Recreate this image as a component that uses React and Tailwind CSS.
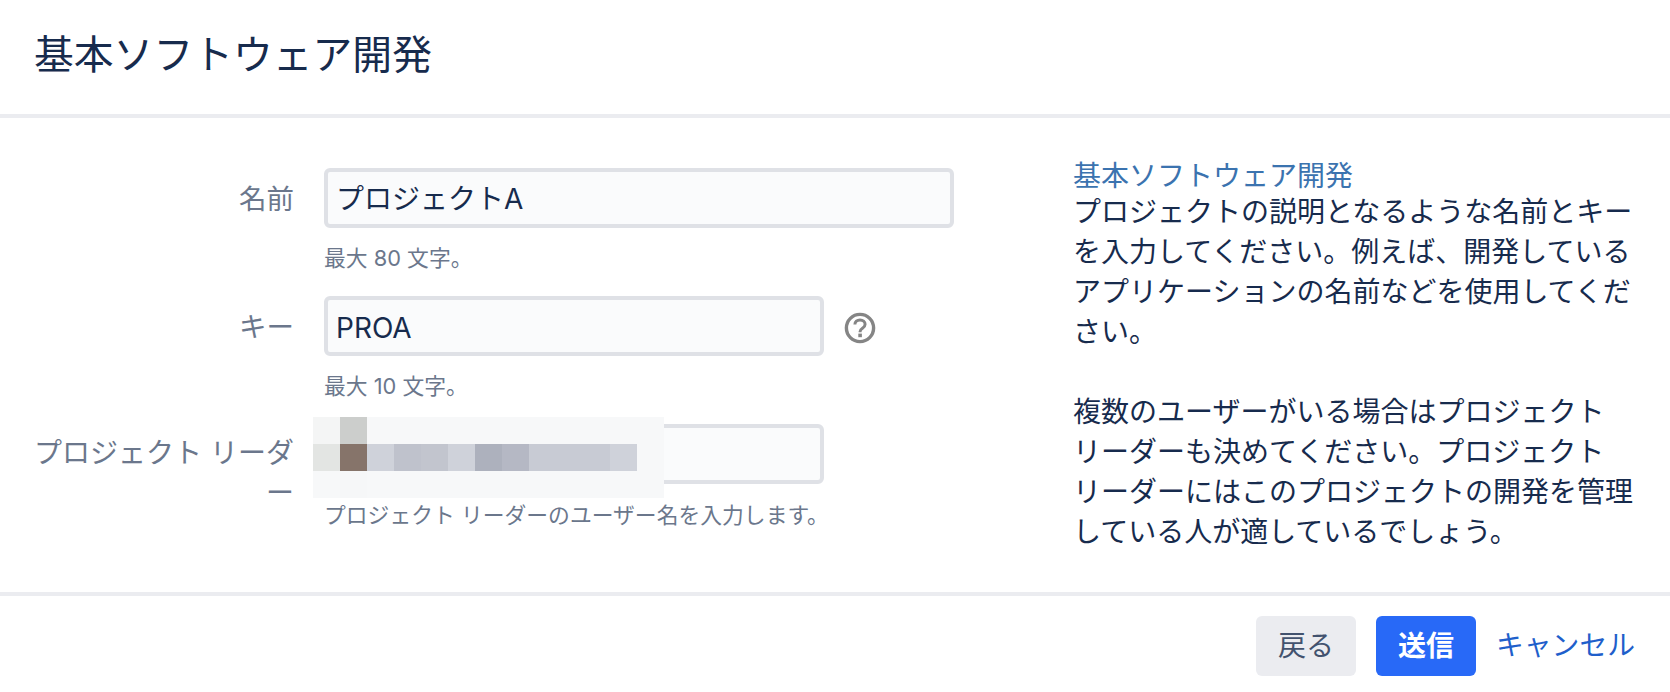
import React from "react";

const FONT = "font-['Inter','Noto_Sans_CJK_JP','Noto_Sans_JP',sans-serif]";

const C = "#f7f8f9";
const rows = [
  ["#f4f5f5", "#cccecc", C, C, C, C, C, C, C, C, C, C, C],
  ["#e3e5e3", "#86746a", "#cfd2da", "#bfc2cc", "#c2c5ce", "#cfd2da", "#adb1bd", "#b5b8c4", "#c8cbd4", "#c8cbd4", "#c8cbd4", "#cfd2da", C],
  [C, "#f6f7f8", C, C, C, C, C, C, C, C, C, C, C],
];

function Mosaic() {
  return (
    <div className="absolute left-[-11px] top-[-7px] grid grid-cols-[repeat(13,27px)] grid-rows-[repeat(3,27px)]">
      {rows.flat().map((c, i) => (
        <div key={i} style={{ backgroundColor: c }} />
      ))}
    </div>
  );
}

function HelpIcon() {
  return (
    <svg width="32" height="32" viewBox="0 0 32 32" fill="none" className="ml-5 mt-[16px] shrink-0">
      <circle cx="16" cy="16" r="13.6" stroke="#858585" strokeWidth="3.4" />
      <path
        d="M10.9 12.6c0-2.9 2.2-4.7 5.1-4.7s5.1 1.7 5.1 4.3c0 2-1.1 3-2.6 4-1.5 1-2.4 1.7-2.4 3.4v.6"
        stroke="#858585"
        strokeWidth="3"
      />
      <rect x="14.3" y="21.6" width="3.6" height="3.6" fill="#858585" />
    </svg>
  );
}

function Field({ label, value, hint, inputWidth, help, overlay, inputClass = "", labelClass = "pt-[11px] text-[27.5px]", hintMt = "mt-[14px]", mb = "mb-[22px]" }) {
  return (
    <div className={`flex items-start ${mb}`}>
      <label className={`ml-[23px] w-[271px] shrink-0 text-right leading-[40px] text-[#6b778c] ${labelClass}`}>
        {label}
      </label>
      <div className="ml-[30px]">
        <div className="flex items-start">
          <div className={`relative ${inputWidth}`}>
            <input
              readOnly
              value={value}
              className={`block h-[60px] w-full rounded-md border-4 border-[#dfe1e6] bg-[#fafbfc] px-[8px] text-[28px] text-[#172b4d] outline-none ${inputClass}`}
            />
            {overlay}
          </div>
          {help}
        </div>
        <div className={`${hintMt} text-[21.8px] leading-[32px] text-[#6b778c]`}>{hint}</div>
      </div>
    </div>
  );
}

export default function App() {
  return (
    <div className={`${FONT} flex h-[692px] w-[1670px] flex-col overflow-hidden bg-white text-[#172b4d]`}>
      <header className="flex h-[118px] shrink-0 items-center border-b-4 border-[#ebecf0] pb-[4px] pl-[34px]">
        <h1 className="text-[39.8px] font-normal leading-[48px]">基本ソフトウェア開発</h1>
      </header>

      <main className="flex h-[474px] shrink-0">
        <section className="w-[1073px] shrink-0 pt-[50px]">
          <Field label="名前" value="プロジェクトA" hint="最大 80 文字。" inputWidth="w-[630px]" inputClass="pb-[3px]" />
          <Field label="キー" value="PROA" hint="最大 10 文字。" inputWidth="w-[500px]" inputClass="pt-[3px]" help={<HelpIcon />} />
          <Field
            label="プロジェクト リーダー"
            value=""
            hint="プロジェクト リーダーのユーザー名を入力します。"
            inputWidth="w-[500px]"
            overlay={<Mosaic />}
            labelClass="pt-[9px] text-[28px]"
            hintMt="mt-[15px]"
            mb="mb-0"
          />
        </section>

        <aside className="w-[565px] shrink-0 pt-[42px] text-[28px] leading-[40px]">
          <a className="block leading-[32px] text-[#3b73af]">基本ソフトウェア開発</a>
          <p>プロジェクトの説明となるような名前とキーを入力してください。例えば、開発しているアプリケーションの名前などを使用してください。</p>
          <p className="mt-10">複数のユーザーがいる場合はプロジェクト リーダーも決めてください。プロジェクト リーダーにはこのプロジェクトの開発を管理している人が適しているでしょう。</p>
        </aside>
      </main>

      <footer className="flex flex-1 items-start justify-end border-t-4 border-[#ebecf0] pr-[35px] pt-5">
        <button className="h-[60px] w-[100px] rounded-md bg-[#ebecf0] text-[28px] text-[#42526e]">戻る</button>
        <button className="ml-5 h-[60px] w-[100px] rounded-md bg-[#2869f7] text-[28px] font-bold text-white">送信</button>
        <a className="ml-5 flex h-[60px] w-[139px] items-center text-[27.8px] text-[#1f5fcb]">キャンセル</a>
      </footer>
    </div>
  );
}
